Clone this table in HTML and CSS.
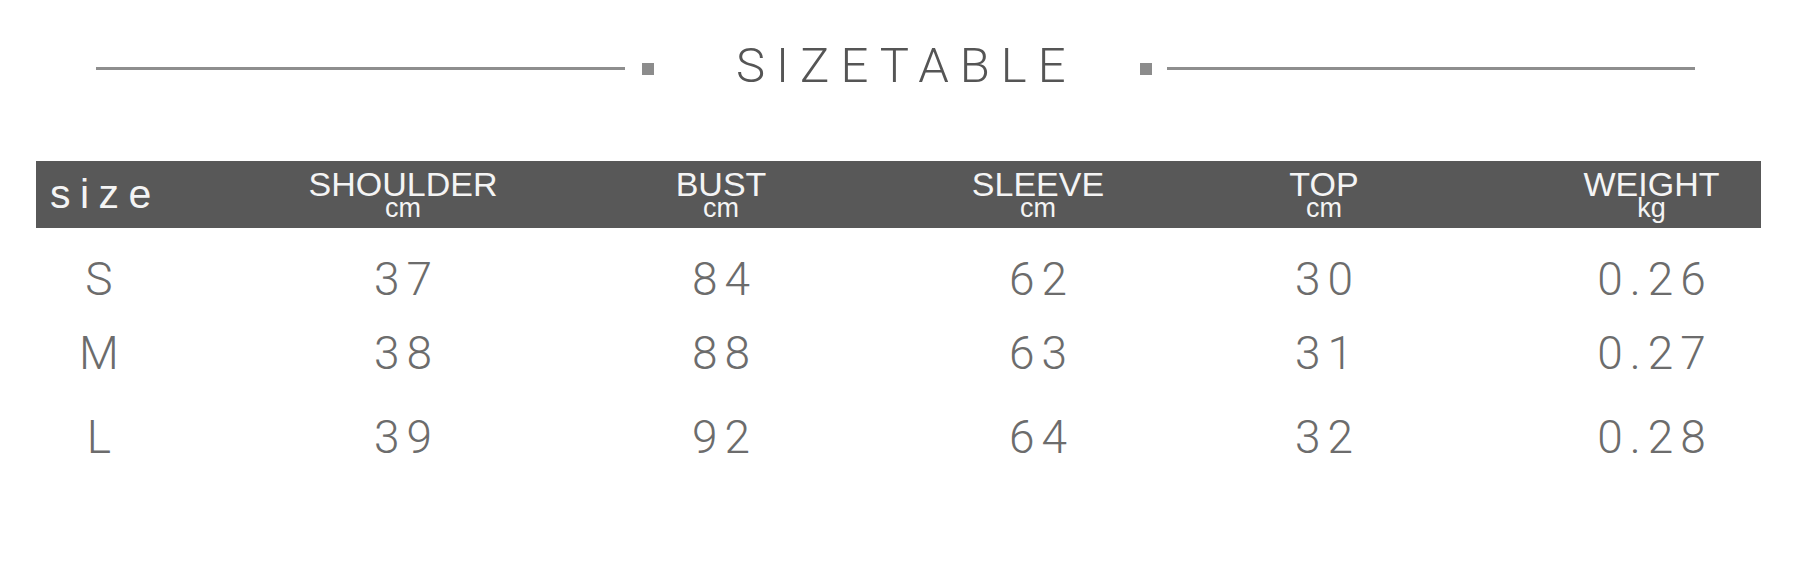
FILE: index.html
```html
<!DOCTYPE html>
<html>
<head>
<meta charset="utf-8">
<link rel="stylesheet" href="styles.css">
</head>
<body>
<div class="page">
  <div class="title">
    <span class="rule"></span>
    <span class="dot dot-left"></span>
    <h1 class="title-text">SIZETABLE</h1>
    <span class="dot dot-right"></span>
    <span class="rule rule-right"></span>
  </div>

  <div class="table">
    <div class="grid head">
      <div class="size-h">size</div>
      <div class="hcell"><span class="lbl">SHOULDER</span><span class="unit">cm</span></div>
      <div class="hcell"><span class="lbl">BUST</span><span class="unit">cm</span></div>
      <div class="hcell"><span class="lbl">SLEEVE</span><span class="unit">cm</span></div>
      <div class="hcell"><span class="lbl">TOP</span><span class="unit">cm</span></div>
      <div class="hcell last"><span class="lbl">WEIGHT</span><span class="unit">kg</span></div>
    </div>

    <div class="body">
      <div class="grid row">
        <div class="sz">S</div>
        <div class="val">37</div>
        <div class="val">84</div>
        <div class="val">62</div>
        <div class="val">30</div>
        <div class="val last">0.26</div>
      </div>
      <div class="grid row">
        <div class="sz">M</div>
        <div class="val">38</div>
        <div class="val">88</div>
        <div class="val">63</div>
        <div class="val">31</div>
        <div class="val last">0.27</div>
      </div>
      <div class="grid row row-l">
        <div class="sz">L</div>
        <div class="val">39</div>
        <div class="val">92</div>
        <div class="val">64</div>
        <div class="val">32</div>
        <div class="val last">0.28</div>
      </div>
    </div>
  </div>
</div>
</body>
</html>
```

FILE: styles.css
```css
html, body {
  margin: 0;
  padding: 0;
  background: #ffffff;
}

.page {
  width: 1800px;
  height: 561px;
  overflow: hidden;
  font-family: "Liberation Sans", Arial, sans-serif;
}

/* ---------- title ---------- */
.title {
  display: flex;
  align-items: center;
  height: 60px;
  margin-top: 38px;
  padding-left: 96px;
}

.rule {
  display: block;
  width: 529px;
  height: 3px;
  background: #8e8e8e;
}

.rule-right {
  width: 528px;
  margin-left: 15px;
}

.dot {
  display: block;
  width: 12px;
  height: 12px;
  background: #8c8c8c;
  margin-top: 2px;
}

.dot-left {
  margin-left: 17px;
}

.dot-right {
  margin-left: 73px;
}

.title-text {
  margin: 0 0 4px 82px;
  width: 331px;
  white-space: nowrap;
  font-family: Roboto, "Liberation Sans", sans-serif;
  font-weight: 300;
  font-size: 49px;
  line-height: 56px;
  letter-spacing: 11px;
  color: #555555;
}

/* ---------- table ---------- */
.table {
  margin-top: 63px;
  margin-left: 36px;
  width: 1725px;
}

.grid {
  display: grid;
  grid-template-columns: 208px 318px 318px 316px 256px 309px;
}

.head {
  height: 67px;
  background: #585858;
  color: #f4f4f4;
}

.size-h {
  padding-left: 14px;
  font-size: 41px;
  line-height: 67px;
  letter-spacing: 9.5px;
}

.hcell {
  display: flex;
  flex-direction: column;
  align-items: center;
  padding-top: 10px;
}

.last {
  padding-left: 90px;
}

.lbl {
  font-size: 34px;
  line-height: 26px;
}

.unit {
  font-size: 27px;
  line-height: 22px;
}

.body {
  padding-top: 14px;
}

.row {
  height: 74px;
  align-items: center;
  font-family: Roboto, "Liberation Sans", sans-serif;
  font-weight: 300;
  font-size: 46px;
  line-height: 74px;
  color: #6c6c6c;
}

.row-l {
  margin-top: 10px;
}

.sz {
  width: 126px;
  text-align: center;
}

.val {
  text-align: center;
  letter-spacing: 7px;
  text-indent: 7px;
}
```
